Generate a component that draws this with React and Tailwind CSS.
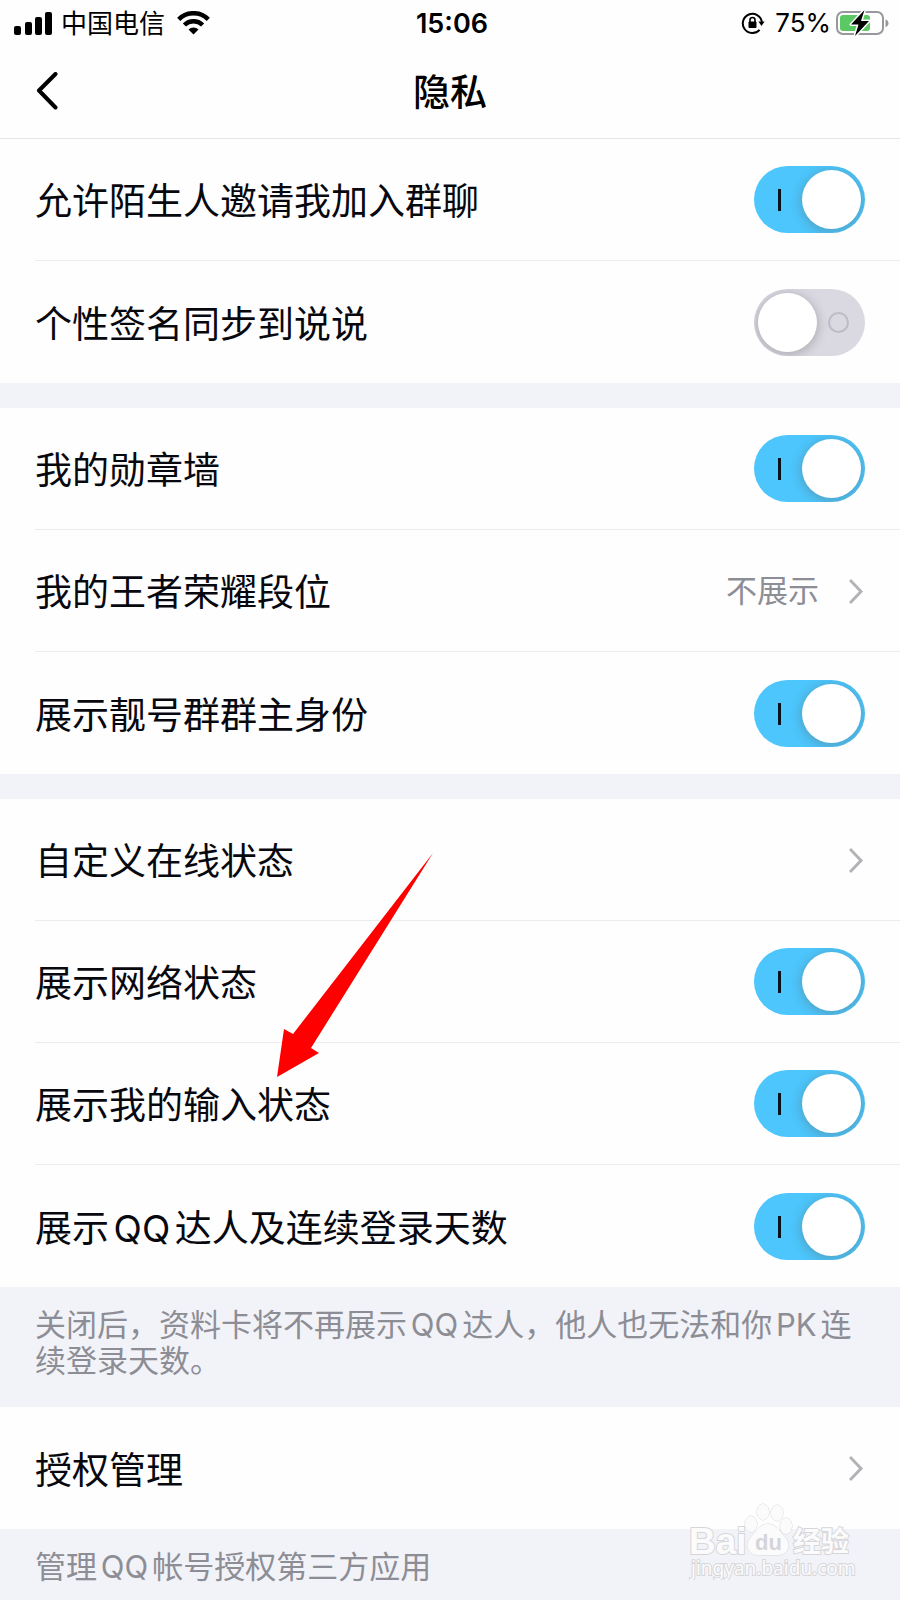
import React, { useState } from 'react';

const sections = [
  {
    rows: [
      { id: 'invite', label: '允许陌生人邀请我加入群聊', type: 'switch', on: true },
      { id: 'signature', label: '个性签名同步到说说', type: 'switch', on: false },
    ],
  },
  {
    rows: [
      { id: 'medals', label: '我的勋章墙', type: 'switch', on: true },
      { id: 'rank', label: '我的王者荣耀段位', type: 'link', value: '不展示' },
      { id: 'groupOwner', label: '展示靓号群群主身份', type: 'switch', on: true },
    ],
  },
  {
    rows: [
      { id: 'customStatus', label: '自定义在线状态', type: 'link' },
      { id: 'network', label: '展示网络状态', type: 'switch', on: true },
      { id: 'typing', label: '展示我的输入状态', type: 'switch', on: true },
      { id: 'streak', label: '展示QQ达人及连续登录天数', type: 'switch', on: true },
    ],
    note: '关闭后，资料卡将不再展示QQ达人，他人也无法和你PK连续登录天数。',
  },
  {
    rows: [{ id: 'auth', label: '授权管理', type: 'link' }],
    note: '管理QQ帐号授权第三方应用',
  },
];

function StatusBar() {
  return (
    <div className="grid grid-cols-[1fr_auto_1fr] items-center h-[46px] pl-[14px] pr-[10px] text-[26px] leading-none">
      <div className="flex items-center">
        <svg className="w-[39px] h-6" viewBox="0 0 39 24" aria-hidden="true">
          <rect x="0" y="15" width="7" height="9" rx="2" />
          <rect x="11" y="11" width="7" height="13" rx="2" />
          <rect x="21" y="6" width="7" height="18" rx="2" />
          <rect x="31" y="1" width="7" height="23" rx="2" />
        </svg>
        <span className="ml-2 pt-0.5">中国电信</span>
        <svg className="w-[33px] h-6 ml-3" viewBox="0 0 33 24" fill="none" stroke="#000" strokeWidth="4.5" aria-hidden="true">
          <path d="M1.700 8.300a21 21 0 0 1 29.600 0" />
          <path d="M7.400 14a13 13 0 0 1 18.200 0" />
          <path d="M11.500 18.600a7.200 7.200 0 0 1 10 0l-5 5z" fill="#000" stroke="none" />
        </svg>
      </div>
      <span className="text-[27px] font-semibold">15:06</span>
      <div className="flex items-center justify-end">
        <svg className="w-6 h-6 mr-[10px]" viewBox="0 0 24 24" fill="none" stroke="#000" aria-hidden="true">
          <path d="M18.600 18.800A9.600 9.600 0 1 1 20.900 11" strokeWidth="2" />
          <path d="M17.400 10.400h6.200l-3.100 4.600z" fill="#000" stroke="none" />
          <rect x="7.500" y="10.500" width="8" height="6.500" rx="1" fill="#000" stroke="none" />
          <path d="M9 11V9a2.500 2.500 0 0 1 5 0v2" strokeWidth="1.600" />
        </svg>
        <span>75%</span>
        <svg className="w-[54px] h-7 ml-[5px]" viewBox="0 0 54 28" aria-hidden="true">
          <rect x="1" y="3" width="46" height="22" rx="6" fill="#fff" stroke="#98989c" strokeWidth="2" />
          <rect x="4" y="6" width="30" height="16" rx="3" fill="#5ac963" />
          <path d="M49.500 10.500c4 1 4 6.500 0 7.500z" fill="#98989c" />
          <path
            d="M28.500 1L15 15.500h7.500L19 27l14-15h-8z"
            fill="#000"
            stroke="#fff"
            strokeWidth="3"
            paintOrder="stroke"
            strokeLinejoin="round"
          />
        </svg>
      </div>
    </div>
  );
}

function NavBar() {
  return (
    <header className="grid grid-cols-[1fr_auto_1fr] items-center h-[93px] px-[35px] border-b border-[#e6e6e8]">
      <button type="button" aria-label="返回" className="justify-self-start">
        <svg className="w-6 h-10" viewBox="0 0 24 40" fill="none" stroke="#000" strokeWidth="4" strokeLinecap="round" strokeLinejoin="round">
          <path d="M20.500 2L4 18.500l16.500 17" />
        </svg>
      </button>
      <h1 className="text-[37px] leading-none font-medium">隐私</h1>
    </header>
  );
}

function Switch({ id, checked, onChange }) {
  return (
    <span className="relative w-[111px] h-[67px] shrink-0">
      <input
        id={id}
        type="checkbox"
        role="switch"
        checked={checked}
        onChange={onChange}
        className="block w-full h-full appearance-none rounded-full bg-[#dad9e2] checked:bg-[#4cc6fc]"
      />
      {checked ? (
        <span className="absolute left-6 top-[23px] w-[3px] h-[22px] bg-[#06121c] pointer-events-none" />
      ) : (
        <span className="absolute right-4 top-[23px] w-[21px] h-[21px] rounded-full border-2 border-[#bdbcc3] pointer-events-none" />
      )}
      <span className="absolute inset-0 rounded-full overflow-hidden pointer-events-none">
        <span
          className={`absolute top-1 w-[59px] h-[59px] rounded-full bg-white shadow-[0_2px_10px_2px_rgba(90,90,90,0.3)] ${
            checked ? 'right-1' : 'left-1'
          }`}
        />
      </span>
    </span>
  );
}

function Chevron() {
  return (
    <svg className="w-4 h-7" viewBox="0 0 16 28" fill="none" stroke="#b3b3b7" strokeWidth="3" aria-hidden="true">
      <path d="M1 3l11 11.500L1 26" />
    </svg>
  );
}

function Row({ row, last, checked, onToggle }) {
  const base = 'flex items-center justify-between h-[122px] ml-[35px] pr-[35px]';
  const border = last ? '' : 'border-b border-[#ececf0]';

  if (row.type === 'link') {
    return (
      <a href={`#${row.id}`} className={`${base} ${border}`}>
        <span className="pt-1 text-[37px] leading-none">{row.label}</span>
        <span className="flex items-center gap-[30px] text-[31px] leading-none text-[#8d8d95]">
          {row.value}
          <Chevron />
        </span>
      </a>
    );
  }

  return (
    <div className={`${base} ${border}`}>
      <label htmlFor={row.id} className="pt-1 text-[37px] leading-none">
        {row.label}
      </label>
      <Switch id={row.id} checked={checked} onChange={() => onToggle(row.id)} />
    </div>
  );
}

function Arrow() {
  return (
    <svg className="absolute left-[276px] top-[852px] w-[158px] h-[226px] pointer-events-none" viewBox="0 0 158 226" aria-hidden="true">
      <path d="M157 1L17 182l-9-5L1 225l42-24-8-5z" fill="#fe0000" />
    </svg>
  );
}

function Watermark() {
  return (
    <svg
      className="absolute right-[44px] bottom-5 w-[168px] h-[90px] pointer-events-none"
      viewBox="0 0 168 90"
      fill="#fbfbfc"
      stroke="#d6d6da"
      strokeWidth="2"
      paintOrder="stroke"
    >
      <g fontWeight="700">
        <text x="1" y="64" fontSize="37" fontFamily="Liberation Sans, sans-serif">Bai</text>
        <text x="105" y="62" fontSize="28" fontFamily="Noto Sans CJK SC, sans-serif">经验</text>
      </g>
      <g strokeWidth="1">
        <ellipse cx="63" cy="34" rx="6" ry="8" />
        <ellipse cx="75" cy="22" rx="6" ry="8" />
        <ellipse cx="89" cy="23" rx="6" ry="8" />
        <ellipse cx="98" cy="36" rx="6" ry="8" />
        <path d="M80 34c9 0 12 8 17 13 7 7 3 18-6 18-5 0-17 0-22 0-9 0-13-11-6-18 5-5 8-13 17-13z" />
      </g>
      <text x="67" y="60" fontSize="22" fontWeight="700" fontFamily="Liberation Sans, sans-serif" fill="#d4d4d9" stroke="none">du</text>
      <text x="3" y="85" fontSize="19" fontFamily="Noto Sans, sans-serif">jingyan.baidu.com</text>
    </svg>
  );
}

export default function App() {
  const [values, setValues] = useState(() =>
    Object.fromEntries(sections.flatMap((s) => s.rows).map((r) => [r.id, Boolean(r.on)]))
  );

  const handleToggle = (id) => {
    setValues((prev) => ({ ...prev, [id]: !prev[id] }));
  };

  return (
    <div className="relative min-h-screen overflow-hidden bg-[#f2f3f8] text-[#08080f] font-[Inter,'Noto_Sans_CJK_SC',sans-serif] [text-autospace:normal]">
      <div className="bg-[#fefefe] text-black">
        <StatusBar />
        <NavBar />
      </div>

      <main>
        {sections.map((section, i) => (
          <section key={i}>
            <div className="bg-[#fefefe]">
              {section.rows.map((row, j) => (
                <Row
                  key={row.id}
                  row={row}
                  last={j === section.rows.length - 1}
                  checked={values[row.id]}
                  onToggle={handleToggle}
                />
              ))}
            </div>
            {section.note ? (
              <p
                className={`px-[35px] pt-5 text-[31px] leading-[36px] text-[#8d8d95] ${
                  i === sections.length - 1 ? 'pb-3' : 'pb-7'
                }`}
              >
                {section.note}
              </p>
            ) : (
              <div className="h-[25px]" />
            )}
          </section>
        ))}
      </main>

      <Arrow />
      <Watermark />
    </div>
  );
}
